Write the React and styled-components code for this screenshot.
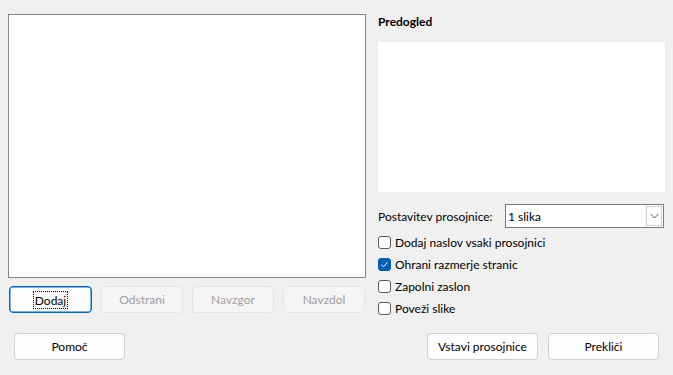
import React from "react";
import styled, { createGlobalStyle } from "styled-components";

const Global = createGlobalStyle`
  html, body { margin: 0; padding: 0; background: #f0f0f0; }
  body { font-family: "Segoe UI", Lato, "Noto Sans", sans-serif; font-size: 12px; color: #000; }
  * { box-sizing: border-box; }
`;

const Dialog = styled.div`
  width: 673px;
  height: 375px;
  background: #f0f0f0;
  display: flex;
  flex-direction: column;
  padding: 14px 8px 0 8px;
`;

const Top = styled.div`
  display: flex;
  align-items: flex-start;
  gap: 12px;
  height: 299px;
`;

const LeftCol = styled.div`
  width: 358px;
  display: flex;
  flex-direction: column;
  gap: 8px;
`;

const ListBox = styled.div`
  width: 358px;
  height: 264px;
  background: #fff;
  border: 1px solid #82868c;
`;

const ButtonRow = styled.div`
  display: flex;
  justify-content: space-between;
  padding: 0 1px;
`;

const Button = styled.button`
  width: ${(p) => p.$w || 82}px;
  height: 27px;
  font-family: inherit;
  font-size: 12px;
  line-height: 16px;
  padding: 0;
  border-radius: 4px;
  border: 1px solid ${(p) => (p.$focus ? "#0067c0" : p.disabled ? "#e4e4e4" : "#d0d0d0")};
  box-shadow: ${(p) => (p.$focus ? "inset 0 0 0 0.5px #0067c0" : "none")};
  background: ${(p) => (p.disabled ? "#f5f5f5" : "#fdfdfd")};
  color: ${(p) => (p.disabled ? "#a0a0a0" : "#000")};
  display: flex;
  align-items: center;
  justify-content: center;
  cursor: default;
`;

const FocusLabel = styled.span`
  outline: 1px dotted #000;
  outline-offset: 0;
  padding: 1px 1px 0;
  line-height: 15px;
`;

const RightCol = styled.div`
  width: 287px;
  display: flex;
  flex-direction: column;
`;

const Heading = styled.div`
  font-weight: bold;
  height: 16px;
  line-height: 16px;
  margin-bottom: 12px;
`;

const Preview = styled.div`
  height: 150px;
  background: #fff;
`;

const FieldRow = styled.div`
  display: flex;
  align-items: center;
  margin-top: 12px;
  height: 24px;
`;

const Label = styled.span`
  width: 127px;
  white-space: nowrap;
`;

const Select = styled.div`
  flex: 1;
  height: 24px;
  margin-right: 1px;
  background: #fff;
  border: 1px solid #7a7a7a;
  display: flex;
  align-items: center;
  padding: 1px;
`;

const SelectValue = styled.span`
  flex: 1;
  padding-left: 1px;
`;

const DropButton = styled.span`
  width: 16px;
  height: 100%;
  border: 1px solid #d0d0d0;
  display: flex;
  align-items: center;
  justify-content: center;
`;

const Checks = styled.div`
  display: flex;
  flex-direction: column;
  margin-top: 3px;
`;

const CheckRow = styled.label`
  display: flex;
  align-items: center;
  height: 22px;
  gap: 4px;
`;

const Box = styled.span`
  width: 13px;
  height: 13px;
  border-radius: 3px;
  border: 1px solid ${(p) => (p.$on ? "#005fb8" : "#5c5c5c")};
  background: ${(p) => (p.$on ? "#005fb8" : "#fff")};
  display: flex;
  align-items: center;
  justify-content: center;
`;

const Bottom = styled.div`
  display: flex;
  align-items: center;
  margin-top: 20px;
  padding: 0 6px 0 6px;
`;

const Spacer = styled.div`
  flex: 1;
`;

const Gap = styled.div`
  width: 10px;
`;

function Check({ on, children }) {
  return (
    <CheckRow>
      <Box $on={on}>
        {on && (
          <svg width="9" height="9" viewBox="0 0 9 9">
            <path d="M1.5 4.8 L3.5 6.8 L7.5 2.3" fill="none" stroke="#fff" strokeWidth="1" />
          </svg>
        )}
      </Box>
      <span>{children}</span>
    </CheckRow>
  );
}

export default function App() {
  return (
    <>
      <Global />
      <Dialog>
        <Top>
          <LeftCol>
            <ListBox />
            <ButtonRow>
              <Button $focus $w={83}>
                <FocusLabel>Dodaj</FocusLabel>
              </Button>
              <Button disabled>Odstrani</Button>
              <Button disabled>Navzgor</Button>
              <Button disabled>Navzdol</Button>
            </ButtonRow>
          </LeftCol>
          <RightCol>
            <Heading>Predogled</Heading>
            <Preview />
            <FieldRow>
              <Label>Postavitev prosojnice:</Label>
              <Select>
                <SelectValue>1 slika</SelectValue>
                <DropButton>
                  <svg width="9" height="6" viewBox="0 0 9 6">
                    <path d="M0.5 1 L4.5 5 L8.5 1" fill="none" stroke="#555" strokeWidth="1" />
                  </svg>
                </DropButton>
              </Select>
            </FieldRow>
            <Checks>
              <Check>Dodaj naslov vsaki prosojnici</Check>
              <Check on>Ohrani razmerje stranic</Check>
              <Check>Zapolni zaslon</Check>
              <Check>Poveži slike</Check>
            </Checks>
          </RightCol>
        </Top>
        <Bottom>
          <Button $w={111}>Pomoč</Button>
          <Spacer />
          <Button $w={111}>Vstavi prosojnice</Button>
          <Gap />
          <Button $w={111}>Prekliči</Button>
        </Bottom>
      </Dialog>
    </>
  );
}
